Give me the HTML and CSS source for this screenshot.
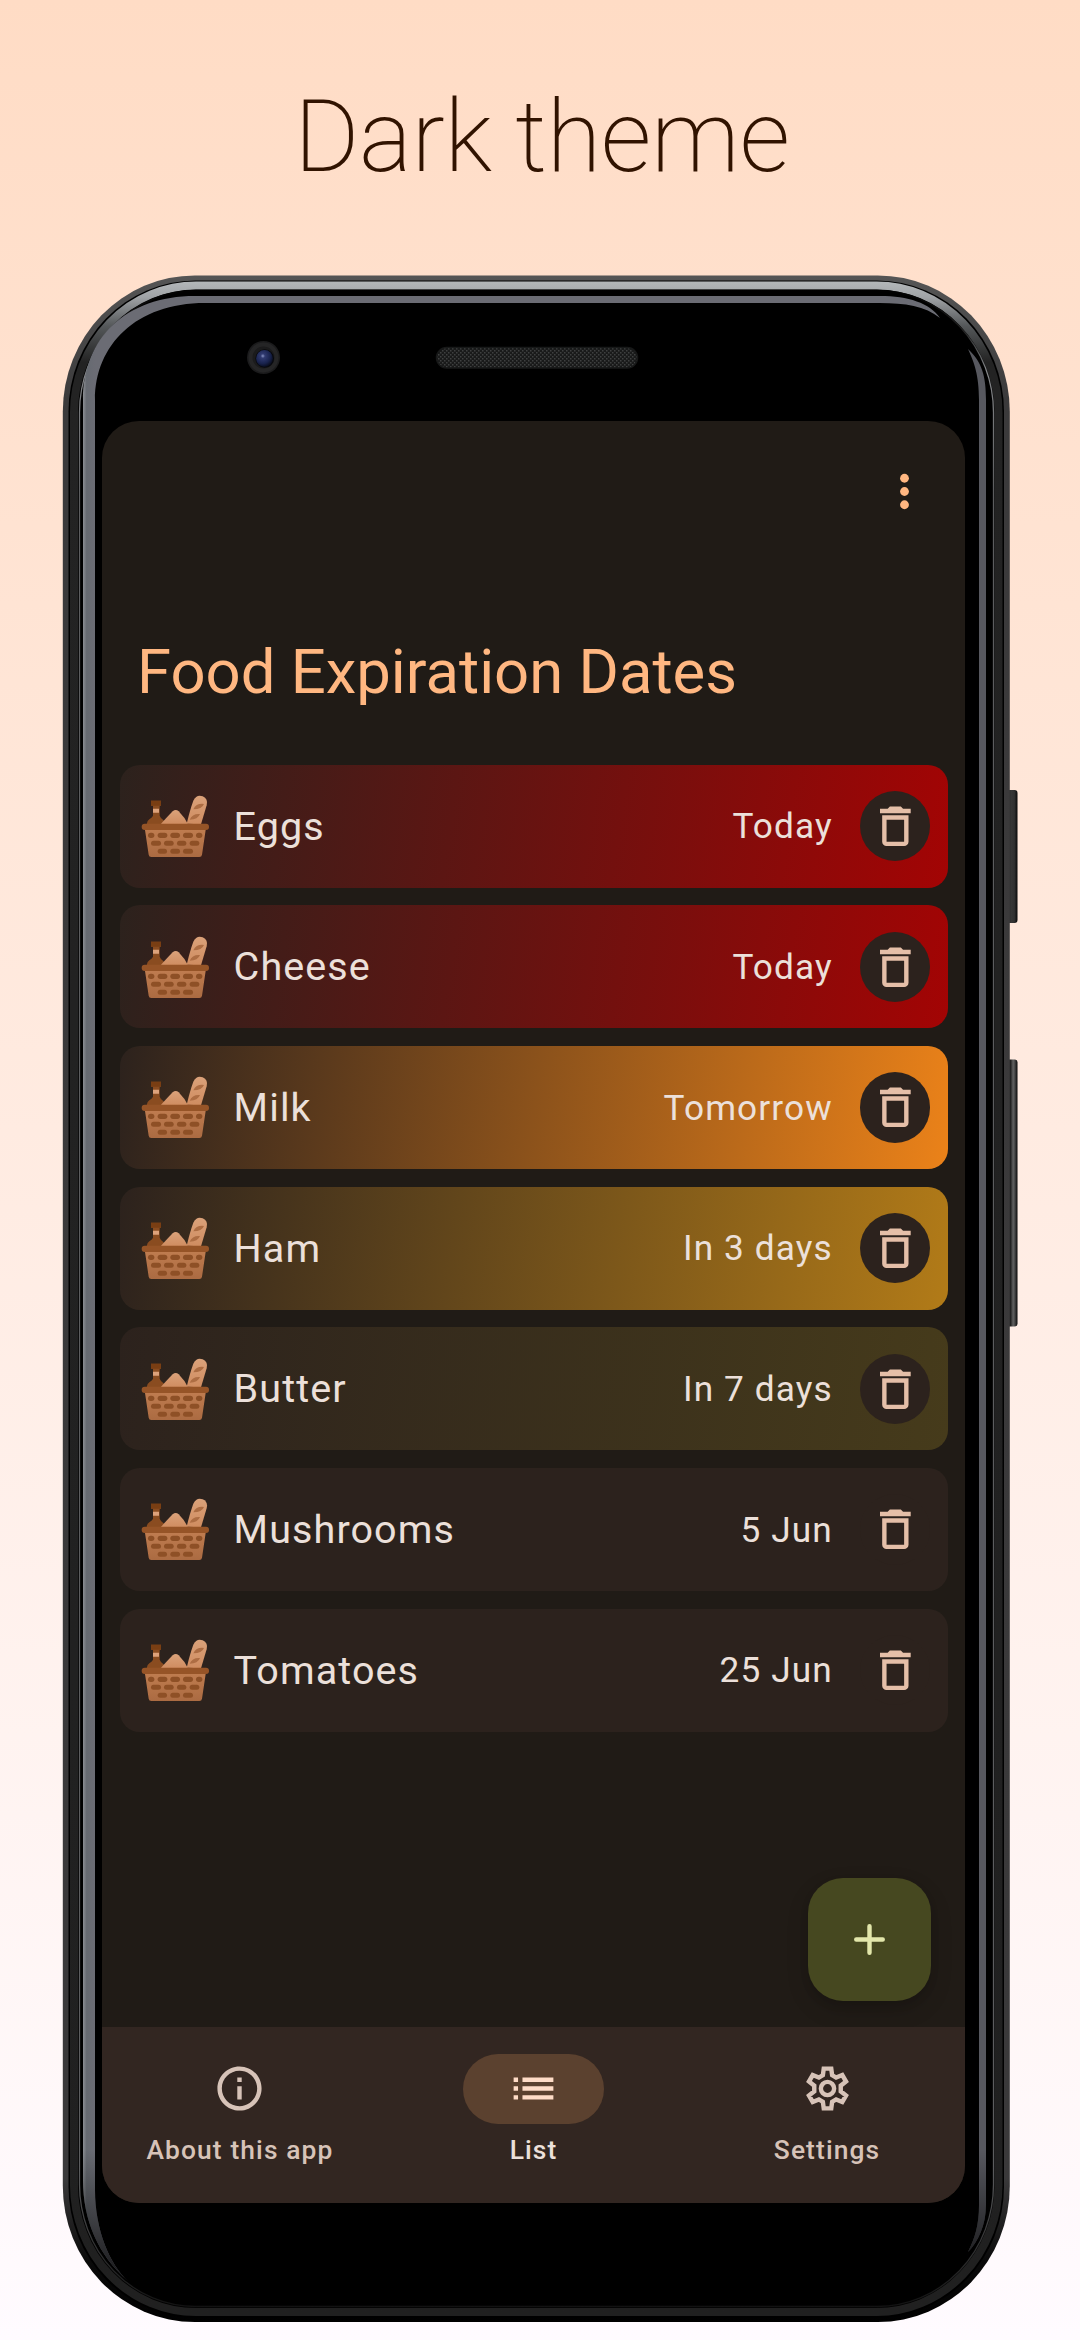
FILE: index.html
```html
<!DOCTYPE html>
<html lang="en">
<head>
<meta charset="utf-8">
<title>Dark theme</title>
<link rel="stylesheet" href="styles.css">
</head>
<body>
<svg class="defs" width="0" height="0" aria-hidden="true">
  <defs>
    <linearGradient id="wicker" x1="0" y1="0" x2="0" y2="1"><stop offset="0" stop-color="#c07d50"/><stop offset="1" stop-color="#ab6b42"/></linearGradient>
    <linearGradient id="loaf" x1="0" y1="0" x2="0" y2="1"><stop offset="0" stop-color="#dba27a"/><stop offset="1" stop-color="#cf8c60"/></linearGradient>
    <symbol id="basket" viewBox="0 0 210 200">
      <path d="M33 23h30v15H59v30q2 6 10 12q7 6 7 14H20q0-10 8-15q9-6 11-11V38h-6z" fill="#8a4c20"/>
      <path d="M33 23h30v15H33z" fill="#793e13"/>
      <path d="M39 47h18v12H39z" fill="#dda27b"/>
      <path d="M62 94Q74 80 98 55q9-8 18 0Q134 73 144 94z" fill="url(#loaf)"/>
      <path d="M140 92Q150 50 160 23Q170 3 188 10Q205 17 200 37L183 94z" fill="url(#loaf)"/>
      <path d="M160 49q9-19 32-16q-6 16-32 16zM149 80q8-19 31-17q-6 17-31 17z" fill="#ad6d43"/>
      <path d="M14 104H198L186 185q-1 7-8 7H34q-7 0-8-7z" fill="url(#wicker)"/>
      <rect x="5" y="92" width="202" height="19" rx="9" fill="#965427"/>
      <g fill="#8e5026">
        <rect x="24" y="119" width="19" height="16" rx="8"/><rect x="53" y="119" width="29" height="16" rx="8"/><rect x="91" y="119" width="29" height="16" rx="8"/><rect x="129" y="119" width="30" height="16" rx="8"/><rect x="168" y="119" width="19" height="16" rx="8"/>
        <rect x="33" y="143" width="30" height="15" rx="7.500"/><rect x="72" y="143" width="29" height="15" rx="7.500"/><rect x="111" y="143" width="28" height="15" rx="7.500"/><rect x="149" y="143" width="29" height="15" rx="7.500"/>
        <rect x="53" y="167" width="28" height="15" rx="7.500"/><rect x="91" y="167" width="29" height="15" rx="7.500"/><rect x="129" y="167" width="30" height="15" rx="7.500"/>
      </g>
    </symbol>
    <symbol id="trash" viewBox="0 0 24 24">
      <path d="M6 19c0 1.100.9 2 2 2h8c1.100 0 2-.9 2-2V7H6v12zM8 9h8v10H8V9zm7.500-5-1-1h-5l-1 1H5v2h14V4h-3.500z"/>
    </symbol>
  </defs>
</svg>

<h1 class="headline">Dark theme</h1>

<div class="phone">
  <svg class="phone-art" viewBox="62 275 956 2047" aria-hidden="true">
    <defs>
      <linearGradient id="edge" x1="0" y1="0" x2="0" y2="1"><stop offset="0" stop-color="#555"/><stop offset=".06" stop-color="#3b3a3b"/><stop offset=".93" stop-color="#3a393a"/><stop offset=".97" stop-color="#0a0a0a"/><stop offset="1" stop-color="#000"/></linearGradient>
      <linearGradient id="rim" gradientUnits="userSpaceOnUse" x1="0" y1="281" x2="0" y2="2316"><stop offset="0" stop-color="#b4b8ba"/><stop offset=".008" stop-color="#a0a3a6"/><stop offset=".022" stop-color="#55585a"/><stop offset=".04" stop-color="#232323"/><stop offset="1" stop-color="#202020"/></linearGradient>
      <linearGradient id="hair" gradientUnits="userSpaceOnUse" x1="0" y1="290" x2="0" y2="2308"><stop offset="0" stop-color="#000"/><stop offset=".02" stop-color="#222"/><stop offset=".04" stop-color="#85878a"/><stop offset=".1" stop-color="#5c5d5f"/><stop offset=".93" stop-color="#5c5d5f"/><stop offset="1" stop-color="#111"/></linearGradient>
      <linearGradient id="glintX" gradientUnits="userSpaceOnUse" x1="83" y1="0" x2="95" y2="0"><stop offset="0" stop-color="#8b8e93"/><stop offset=".3" stop-color="#666a71"/><stop offset="1" stop-color="#6b6c74"/></linearGradient>
      <linearGradient id="fadeB" gradientUnits="userSpaceOnUse" x1="0" y1="2150" x2="0" y2="2282"><stop offset="0" stop-color="#000" stop-opacity="0"/><stop offset="1" stop-color="#000" stop-opacity=".8"/></linearGradient>
      <linearGradient id="key" x1="0" y1="0" x2="1" y2="0"><stop offset="0" stop-color="#151515"/><stop offset=".5" stop-color="#363636"/><stop offset=".75" stop-color="#303030"/><stop offset="1" stop-color="#080808"/></linearGradient>
      <linearGradient id="keyLit" x1="0" y1="0" x2="1" y2="0"><stop offset="0" stop-color="#111"/><stop offset=".45" stop-color="#222"/><stop offset=".65" stop-color="#626262"/><stop offset=".78" stop-color="#484848"/><stop offset="1" stop-color="#080808"/></linearGradient>
      <radialGradient id="lens" cx=".4" cy=".35" r=".65"><stop offset="0" stop-color="#8995c4"/><stop offset=".2" stop-color="#303a70"/><stop offset=".7" stop-color="#18224c"/><stop offset="1" stop-color="#0a0e20"/></radialGradient>
      <pattern id="mesh" width="4" height="4" patternUnits="userSpaceOnUse"><rect width="4" height="4" fill="#191a1a"/><path d="M0 0h1.500v1.500H0zM2 2h1.500v1.500H2z" fill="#3e4040"/></pattern>
    </defs>
    <rect x="1005" y="790" width="12.500" height="133" rx="3" fill="url(#key)"/>
    <rect x="1005" y="1059.500" width="12.500" height="267" rx="3" fill="url(#keyLit)"/>
    <rect x="62.800" y="275.500" width="947" height="2046.500" rx="132" ry="136" fill="url(#edge)"/>
    <rect x="68.500" y="280.500" width="935.500" height="2037" rx="127" ry="131"/>
    <rect x="74" y="285.500" width="924.500" height="2026.500" rx="122" ry="127" fill="none" stroke="url(#rim)" stroke-width="8"/>
    <rect x="79.500" y="290.500" width="914" height="2016" rx="116" ry="122" fill="none" stroke="url(#hair)" stroke-width="1.300"/>
    <path d="M128 2281C98 2255 83 2220 83 2180V400C83 338 126 296 195 296H880C908 296 930 303 940 318C925 306 905 303 880 303H205C136 303 95 345 95 400V2190C95 2230 110 2265 128 2281z" fill="url(#glintX)"/>
    <path d="M968 349C982 362 986 376 986 400V2205C986 2225 978 2242 968 2252C975 2238 979 2225 979 2205V400C979 375 974 362 968 349z" fill="#57585f"/>
    <path d="M128 2281C98 2255 83 2220 83 2180V2150H95V2190C95 2230 110 2265 128 2281zM979 2150H986V2205C986 2225 978 2242 968 2252C975 2238 979 2225 979 2205z" fill="url(#fadeB)"/>
    <circle cx="263.500" cy="357.500" r="16.500" fill="#1b1b1c"/>
    <circle cx="263.500" cy="357.500" r="13" fill="none" stroke="#252526" stroke-width="4"/>
    <circle cx="264.700" cy="358.500" r="9.300" fill="#07080c"/>
    <circle cx="264.500" cy="358.500" r="8.400" fill="url(#lens)"/>
    <rect x="436.500" y="347.500" width="201" height="20.500" rx="10.200" fill="url(#mesh)" stroke="#171818" stroke-width="1.500"/>
  </svg>

  <main class="screen">
    <div class="toolbar">
      <svg class="more" viewBox="0 0 24 24"><g fill="currentColor"><circle cx="12" cy="6" r="2"/><circle cx="12" cy="12" r="2"/><circle cx="12" cy="18" r="2"/></g></svg>
    </div>
    <h2 class="title">Food Expiration Dates</h2>
    <ul class="list">
      <li class="card expired"><svg class="pic"><use href="#basket"/></svg><span class="name">Eggs</span><span class="when">Today</span><span class="bin"><svg><use href="#trash"/></svg></span></li>
      <li class="card expired"><svg class="pic"><use href="#basket"/></svg><span class="name">Cheese</span><span class="when">Today</span><span class="bin"><svg><use href="#trash"/></svg></span></li>
      <li class="card soon"><svg class="pic"><use href="#basket"/></svg><span class="name">Milk</span><span class="when">Tomorrow</span><span class="bin"><svg><use href="#trash"/></svg></span></li>
      <li class="card days"><svg class="pic"><use href="#basket"/></svg><span class="name">Ham</span><span class="when">In 3 days</span><span class="bin"><svg><use href="#trash"/></svg></span></li>
      <li class="card week"><svg class="pic"><use href="#basket"/></svg><span class="name">Butter</span><span class="when">In 7 days</span><span class="bin"><svg><use href="#trash"/></svg></span></li>
      <li class="card"><svg class="pic"><use href="#basket"/></svg><span class="name">Mushrooms</span><span class="when">5 Jun</span><span class="bin"><svg><use href="#trash"/></svg></span></li>
      <li class="card"><svg class="pic"><use href="#basket"/></svg><span class="name">Tomatoes</span><span class="when">25 Jun</span><span class="bin"><svg><use href="#trash"/></svg></span></li>
    </ul>
    <div class="fab"><svg viewBox="0 0 24 24"><path d="M12 6v12M6 12h12" fill="none" stroke="currentColor" stroke-width="2" stroke-linecap="round"/></svg></div>
    <nav class="nav">
      <div class="tab"><span class="pill"><svg viewBox="0 0 24 24"><path d="M11 7h2v2h-2zm0 4h2v6h-2zm1-9C6.480 2 2 6.480 2 12s4.480 10 10 10 10-4.480 10-10S17.520 2 12 2zm0 18c-4.410 0-8-3.590-8-8s3.590-8 8-8 8 3.590 8 8-3.590 8-8 8z"/></svg></span><span>About this app</span></div>
      <div class="tab active"><span class="pill"><svg viewBox="0 0 24 24"><path d="M3 13h2v-2H3v2zm0 4h2v-2H3v2zm0-8h2V7H3v2zm4 4h14v-2H7v2zm0 4h14v-2H7v2zM7 7v2h14V7H7z"/></svg></span><span>List</span></div>
      <div class="tab"><span class="pill"><svg class="gear" viewBox="0 0 24 24"><path d="M10.300 3h3.400l.4 3 1.800 1.050 2.800-1.150 1.700 2.950-2.400 1.850v2.600l2.400 1.850-1.700 2.950-2.800-1.150-1.800 1.050-.4 3h-3.400l-.4-3-1.800-1.050-2.800 1.150-1.700-2.950L6 13.300v-2.600L3.600 8.850 5.300 5.900l2.800 1.150L9.900 6z"/><circle cx="12" cy="12" r="3"/></svg></span><span>Settings</span></div>
    </nav>
  </main>
</div>
</body>
</html>
```
FILE: styles.css
```css
* { box-sizing: border-box; }

body {
  margin: 0;
  width: 1080px;
  height: 2340px;
  overflow: hidden;
  font-family: Roboto, sans-serif;
  background: linear-gradient(#ffdcc5, #fffbff);
}

.defs { display: block; }

.headline {
  margin: 0;
  height: 275px;
  padding: 79px 0 0 4px;
  text-align: center;
  font-size: 99.400px;
  font-weight: 200;
  line-height: 117px;
  letter-spacing: -.35px;
  color: #311300;
}

.phone {
  position: relative;
  width: 956px;
  height: 2047px;
  margin-left: 62px;
  padding: 146px 53px 119px 40px;
}

.phone-art {
  position: absolute;
  inset: 0;
  width: 956px;
  height: 2047px;
}

.screen {
  position: relative;
  display: flex;
  flex-direction: column;
  width: 863px;
  height: 1782px;
  border-radius: 37px;
  overflow: hidden;
  background: #201b16;
}

.toolbar {
  display: flex;
  justify-content: flex-end;
  height: 215px;
  padding: 44px 34.500px 0 0;
  color: #ffb781;
}

.more { width: 53px; height: 53px; }

.title {
  margin: 0;
  height: 128.700px;
  padding-left: 35px;
  font-size: 61.600px;
  font-weight: 400;
  line-height: 73px;
  color: #ffb781;
}

.list {
  display: flex;
  flex-direction: column;
  gap: 17.700px;
  margin: 0;
  padding: 0 17px 0 17.600px;
  list-style: none;
}

.card {
  display: flex;
  align-items: center;
  height: 123px;
  padding: 0 18px 0 20.500px;
  border-radius: 20px;
  background: linear-gradient(98.400deg, #2c221d, var(--tint, #2c221d));
  color: #ece0da;
}

.expired { --tint: #a30404; }
.soon { --tint: #eb8219; }
.days { --tint: #b27b18; }
.week { --tint: #463b1b; }

.pic { width: 70px; height: 66.700px; margin-right: 23.500px; }

.name {
  flex: 1;
  font-size: 39.500px;
  letter-spacing: 1.100px;
}

.when {
  margin-right: 27px;
  font-size: 35.200px;
  letter-spacing: 1.100px;
}

.bin {
  display: grid;
  place-items: center;
  width: 70.300px;
  height: 70.300px;
  border-radius: 50%;
  background: #2c221d;
  fill: #e5bfa8;
}

.bin svg { width: 52.700px; height: 52.700px; }

.fab {
  display: grid;
  place-items: center;
  width: 123px;
  height: 123px;
  margin: auto 34.500px 26.500px auto;
  border-radius: 35px;
  background: #464820;
  color: #e3e7ab;
  box-shadow: 0 9px 22px rgba(0, 0, 0, .15), 0 4px 8px rgba(0, 0, 0, .1);
}

.fab svg { width: 53px; height: 53px; }

.nav {
  display: grid;
  grid-template-columns: repeat(3, 1fr);
  gap: 17.600px;
  height: 175.700px;
  padding-top: 26.500px;
  background: #322621;
  color: #d7c3b8;
}

.tab {
  display: flex;
  flex-direction: column;
  align-items: center;
  gap: 9px;
  font-size: 26.400px;
  font-weight: 500;
  line-height: 35px;
  letter-spacing: 1.100px;
}

.pill {
  display: grid;
  place-items: center;
  width: 140.600px;
  height: 70.300px;
  border-radius: 36px;
}

.pill svg { width: 53px; height: 53px; fill: currentColor; }
.pill .gear { fill: none; stroke: currentColor; stroke-width: 2; }

.active { color: #ece0da; }
.active .pill { background: #5b412f; color: #ffdcc7; }
```
